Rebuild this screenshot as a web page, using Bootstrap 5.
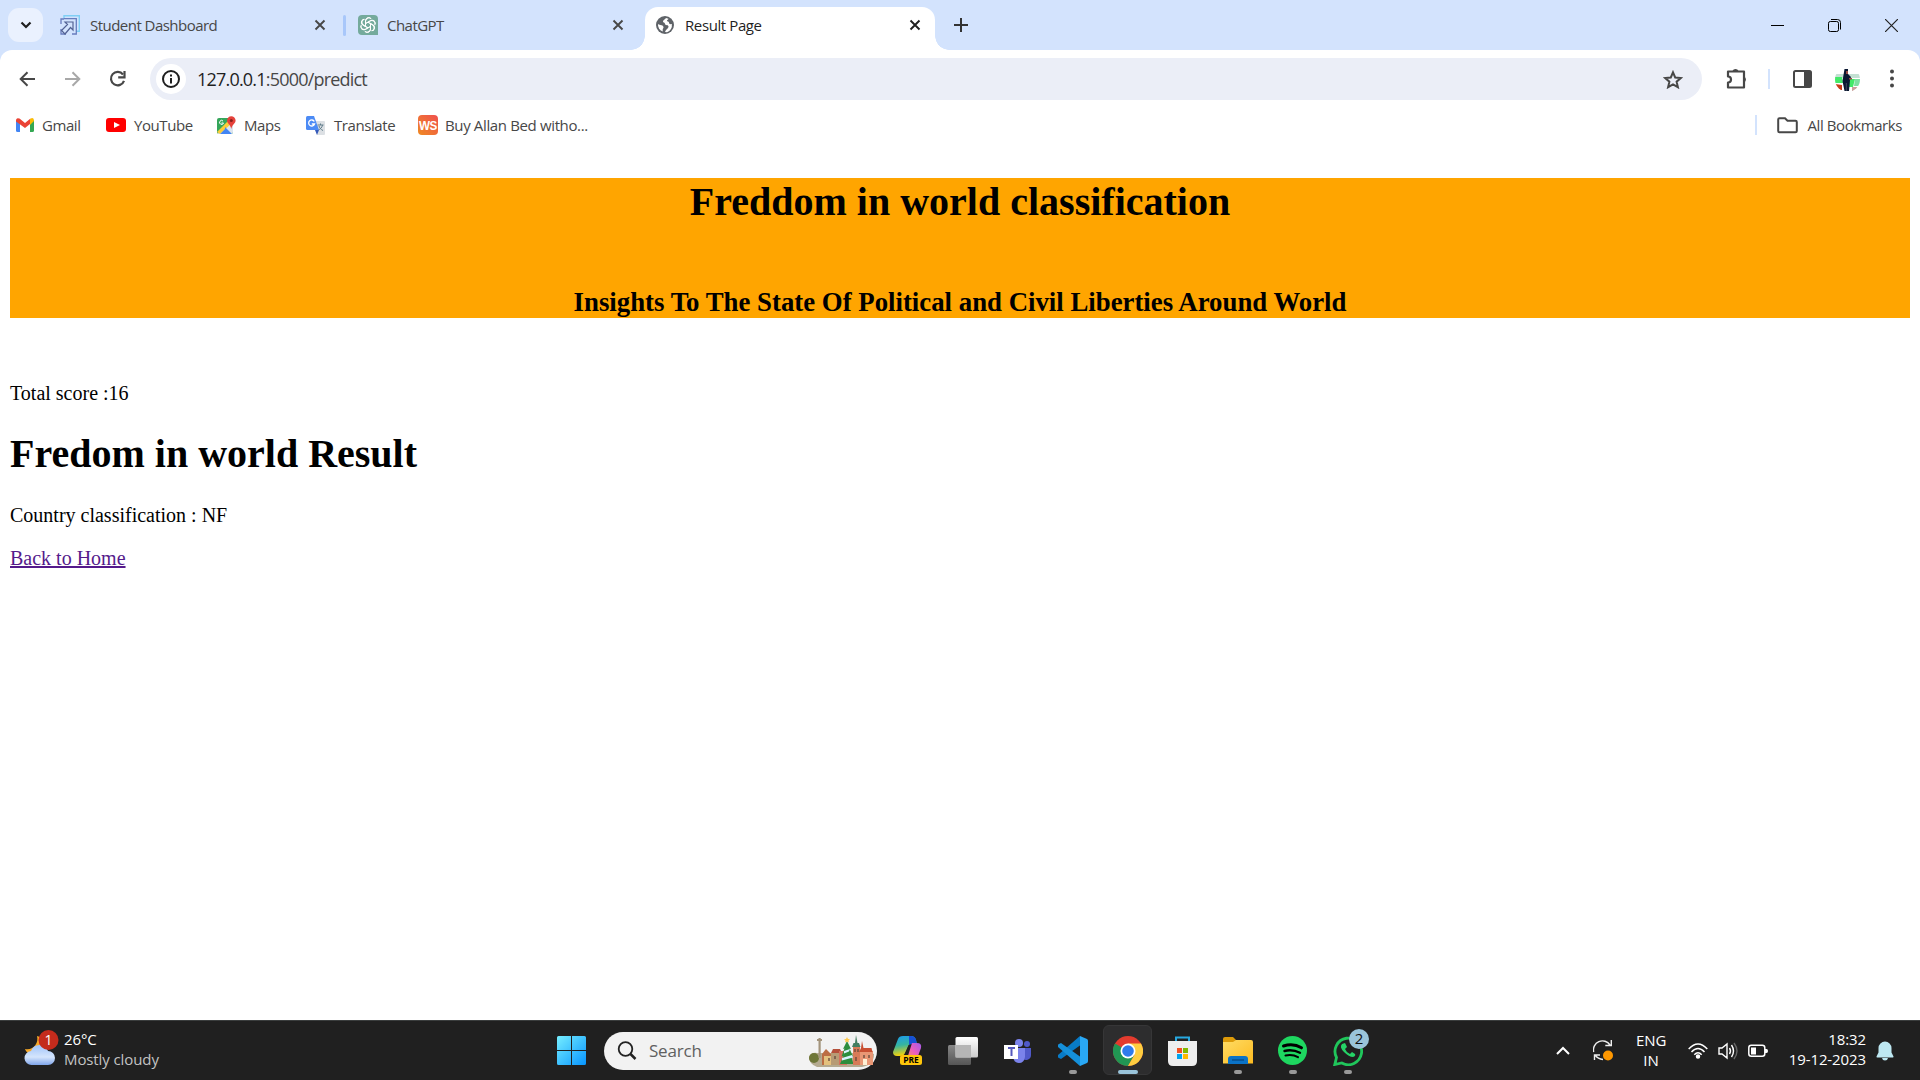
<!DOCTYPE html>
<html lang="en">
<head>
<meta charset="utf-8">
<title>Result Page</title>
<link href="https://cdn.jsdelivr.net/npm/bootstrap@5.3.0/dist/css/bootstrap.min.css" rel="stylesheet">
<style>
body{width:1920px;height:1080px;overflow:hidden;font-family:"Open Sans","Noto Sans",sans-serif;background:#fff;color:#000}
svg{display:block;flex:none}
.strip{height:50px;background:#d3e3fd;padding-left:8px}
.drop{width:35px;height:34px;border-radius:11px;background:#eaf1fe}
.tabx{height:50px;font-size:15px;letter-spacing:-.53px;line-height:20px;color:#474747;white-space:nowrap}
.tab-a{width:300px;padding-left:17px;padding-right:17px}
.tab-b{width:299px;padding-left:12px;padding-right:21px}
.tab-on{width:290px;height:43px;margin-top:7px;background:#fff;border-radius:13px 13px 0 0;padding:0 14px 7px 11px;color:#1f1f1f;position:relative}
.tab-on::before,.tab-on::after{content:"";position:absolute;bottom:0;width:14px;height:14px}
.tab-on::before{left:-14px;background:radial-gradient(circle at 0 0,transparent 13.5px,#fff 14px)}
.tab-on::after{right:-14px;background:radial-gradient(circle at 100% 0,transparent 13.5px,#fff 14px)}
.tab-line{width:3px;height:21px;background:#a8c7fa;border-radius:2px}
.winbtn{width:57px}
.under{background:#d3e3fd}
.tools{height:58px;background:#fff;border-radius:12px 12px 0 0;padding:0 16px 0 17px}
.omni{width:1552px;height:42px;border-radius:21px;background:#ebeef7;margin-left:23px;padding:0 19px 0 6px;font-size:18px}
.info{width:30px;height:30px;border-radius:50%;background:#fff;margin-right:11px}
.url{letter-spacing:-.8px;color:#474747}.url b{font-weight:400;color:#1f1f1f}
.marks{height:36px;font-size:15px;letter-spacing:-.42px;color:#474747;padding:0 18px 2px 16px;white-space:nowrap}
.vline{width:2px;height:20px;background:#d3e3fd}
.site{height:876px;font:20px/23px "Liberation Serif",serif;padding:34px 10px 0}
.banner{height:140px;background:orange}
.site h1{font-size:40px;font-weight:700;line-height:46px;margin:0}
.banner h1{padding-top:1px}
.banner h2{font-size:26.8px;font-weight:700;line-height:30px;margin:0;padding-bottom:1px}
.visited{color:#551a8b}
.bar{height:60px;background:#202020;border-top:1px solid #3a3d3d;color:#fff;font-size:15px;letter-spacing:-.1px;line-height:20px;white-space:nowrap}
.wx{width:544px;padding-left:24px}
.lift{padding-bottom:4px}
.slot{width:55px;height:59px;position:relative}
.slot.on::before{content:"";position:absolute;left:3px;right:3px;top:4px;height:50px;border-radius:6px;background:#2d2d2e;border:1px solid #363637}
.slot svg{position:relative}
.dot{position:absolute;left:24px;top:49px;width:8px;height:4px;border-radius:2px;background:#999}
.on .dot{left:18px;width:20px;background:#9ac4da}
.find{width:273px;height:38px;border-radius:19px;background:#f2f2f2;margin:0 3px 0 5px;padding:0 3px 0 13px;font-size:17px;letter-spacing:-.2px;color:#606060}
.tray{margin-left:auto;padding-right:26px}
</style>
<script src="https://cdn.jsdelivr.net/npm/bootstrap@5.3.0/dist/js/bootstrap.bundle.min.js"></script>
</head>
<body class="d-flex flex-column">
<svg width="0" height="0" class="position-absolute"><defs>
<symbol id="x" viewBox="0 0 12 12"><path d="M1.5 1.5l9 9M10.500 1.500l-9 9" stroke="currentColor" stroke-width="1.900"/></symbol>
<linearGradient id="win" x2="1" y2="1"><stop stop-color="#76eeff"/><stop offset="1" stop-color="#0795ff"/></linearGradient>
<linearGradient id="ws" x1="1" x2="0" y2="1"><stop stop-color="#f04f4f"/><stop offset="1" stop-color="#ef8a22"/></linearGradient>
<linearGradient id="cl" y2="1" x2="0"><stop stop-color="#9fc3fa"/><stop offset=".6" stop-color="#d5e5fc"/><stop offset="1" stop-color="#7fa5ea"/></linearGradient>
<linearGradient id="cp1" x2=".2" y2="1"><stop stop-color="#1b9bf0"/><stop offset=".5" stop-color="#35b5a0"/><stop offset="1" stop-color="#f5d20a"/></linearGradient>
<linearGradient id="cp2" x1="1" x2="0" y2="1"><stop stop-color="#a25bea"/><stop offset=".5" stop-color="#e95cc0"/><stop offset="1" stop-color="#ff9160"/></linearGradient>
<linearGradient id="tv" y2="1" x2="0"><stop stop-color="#fff"/><stop offset="1" stop-color="#ccc"/></linearGradient>
<linearGradient id="tg" y2="1" x2="0"><stop stop-color="#888"/><stop offset="1" stop-color="#555"/></linearGradient>
<linearGradient id="fo" x2="1" y2="1"><stop stop-color="#ffdc65"/><stop offset="1" stop-color="#fdbb20"/></linearGradient>
<clipPath id="ava"><circle cx="12.500" cy="12.500" r="12.500"/></clipPath>
<clipPath id="mapclip"><rect y="2" width="16" height="16" rx="2"/></clipPath>
</defs></svg>

<!-- tab strip -->
<header class="strip d-flex align-items-center">
 <div class="drop d-flex align-items-center justify-content-center"><svg width="12" height="8" viewBox="0 0 12 8"><path d="M1.500 1.500L6 6l4.500-4.500" fill="none" stroke="#1f1f1f" stroke-width="2.200"/></svg></div>
 <div class="tabx tab-a d-flex align-items-center">
  <svg width="20" height="20" viewBox="0 0 20 20" fill="none"><path d="M4 4V.700h15.300v15.500H16" stroke="#80cff5" stroke-width="1.400"/><path d="M4 3.700h12.300V19H12M1 9V4h3M1 14v5h5" stroke="#687cbd" stroke-width="1.300"/><path d="M5 7h8v8l-2.500-2.500L5 19l-3.500-3.500L7.500 9.500z" stroke="#536293" stroke-width="1.200"/></svg>
  <span style="margin-left:10px">Student Dashboard</span><svg class="ms-auto" width="12" height="12"><use href="#x"/></svg>
 </div>
 <div class="tab-line"></div>
 <div class="tabx tab-b d-flex align-items-center">
  <svg width="20" height="20" viewBox="0 0 20 20" fill="none"><path d="M4 0h12a4 4 0 0 1 4 4v16H4a4 4 0 0 1-4-4V4a4 4 0 0 1 4-4z" fill="#74aa9c"/><g stroke="#fff" stroke-width="1"><path id="petal" d="M7.500 11.500V6C7.500 2.200 11.800 1.500 13.400 4.200M7.500 8.600l4.200-2.500c3-1.600 5.700.7 5.300 3.200"/><use href="#petal" transform="rotate(60 10 10)"/><use href="#petal" transform="rotate(120 10 10)"/><use href="#petal" transform="rotate(180 10 10)"/><use href="#petal" transform="rotate(240 10 10)"/><use href="#petal" transform="rotate(300 10 10)"/></g></svg>
  <span style="margin-left:9px">ChatGPT</span><svg class="ms-auto" width="12" height="12"><use href="#x"/></svg>
 </div>
 <div class="tabx tab-on d-flex align-items-center">
  <svg width="18" height="18" viewBox="0 0 18 18"><circle cx="9" cy="9" r="9" fill="#5f6368"/><path d="M10 2c-1 2-3 1.500-3 3.500C7 7 9 6 9 8c0 1.500 4 .5 3.500 3-.5 2-3 2.500-3.500 5l2 .2A7.200 7.200 0 0 0 15.800 8c-2 .5-2.700-.2-2.800-1.500-.1-1.200-2-.7-2-2 0-1 1.500-.7 1.500-1.800zM2 8c2 1.500 5 .5 5.500 3 .3 1.400-1.500 1.500-.5 4.600A7 7 0 0 1 2 8z" fill="#fff"/></svg>
  <span style="margin-left:11px;letter-spacing:-.4px">Result Page</span><svg class="ms-auto" width="12" height="12"><use href="#x"/></svg>
 </div>
 <svg style="margin-left:19px" width="14" height="14"><path d="M7 0v14M0 7h14" stroke="#333" stroke-width="2"/></svg>
 <div class="ms-auto d-flex align-items-center">
  <div class="winbtn d-flex justify-content-center"><svg width="13" height="13"><path d="M0 6.500h13" stroke="#000"/></svg></div>
  <div class="winbtn d-flex justify-content-center"><svg width="13" height="13" fill="none" stroke="#000"><rect x=".5" y="2.500" width="10" height="10" rx="1.800"/><path d="M3 .5h6.500a3 3 0 0 1 3 3V10.500"/></svg></div>
  <div class="winbtn d-flex justify-content-center"><svg width="13" height="13"><path d="M0 0l13 13M13 0L0 13" stroke="#222" stroke-width="1.200"/></svg></div>
 </div>
</header>

<!-- toolbar -->
<div class="under"><div class="tools d-flex align-items-center">
 <svg width="20" height="16" viewBox="0 0 20 16" fill="none" stroke="#474747" stroke-width="2"><path d="M18 8H4M10.500 1.200L3.700 8l6.800 6.800"/></svg>
 <svg style="margin-left:26px" width="20" height="16" viewBox="0 0 20 16" fill="none" stroke="#a8a8a8" stroke-width="2"><path d="M2 8h14M9.500 1.200L16.300 8l-6.800 6.800"/></svg>
 <svg style="margin-left:25px" width="19" height="18" viewBox="0 0 19 18" fill="none" stroke="#474747" stroke-width="2.200"><path d="M15 4.500a6.700 6.700 0 1 0 1 6.300"/><path d="M16.500 1v6.300h-6.300" /></svg>
 <div class="omni d-flex align-items-center">
  <div class="info d-flex align-items-center justify-content-center"><svg width="18" height="18" fill="none"><circle cx="9" cy="9" r="8" stroke="#1f1f1f" stroke-width="2"/><path d="M9 8v5.500M9 4.500v2" stroke="#1f1f1f" stroke-width="2"/></svg></div>
  <span class="url"><b>127.0.0.1</b>:5000/predict</span>
  <svg class="ms-auto" width="20" height="19" viewBox="0 0 20 19"><path d="M10 2.300l2.200 5.200 5.600.5-4.200 3.700 1.300 5.500L10 14.300l-4.900 2.900 1.300-5.500L2.200 8l5.600-.5z" fill="none" stroke="#474747" stroke-width="2"/></svg>
 </div>
 <svg style="margin-left:24px" width="22" height="22" viewBox="0 0 22 22"><path d="M2 3.500h16v16H2v-5c4 0 4-6 0-6z" fill="none" stroke="#474747" stroke-width="2.200" stroke-linejoin="round"/><path d="M6.500 3a3.200 3 0 0 1 6 0zM18 8.500a3 3.200 0 0 1 0 6z" fill="#474747"/></svg>
 <div class="vline" style="margin-left:20px"></div>
 <svg style="margin-left:23px" width="19" height="18"><rect x="1" y="1" width="17" height="16" rx="1.500" fill="none" stroke="#474747" stroke-width="2"/><path d="M11 1h7v16h-7z" fill="#474747"/></svg>
 <svg style="margin-left:23px" width="25" height="25"><g clip-path="url(#ava)"><path d="M0 0h25v25H0z" fill="#fff"/><path d="M0 7h25v4H0z" fill="#c3e0d2"/><path d="M0 10h7l1 6H0zM14 12h6l-2 8h-4z" fill="#43e968"/><path d="M20 12h5v7h-6z" fill="#7de0a0"/><path d="M0 17l7 1v5H0z" fill="#c73d18"/><path d="M17 20h8v5h-8z" fill="#c8a09b"/><path d="M9.500 2h3.500v5l3 3-1 3-1 11H9.500L7.500 14l1-6z" fill="#0b1832"/><path d="M11 4h2v3h-2zM14 11h3v1.500h-3z" fill="#974c45"/><path d="M11.300 16v8" stroke="#5a6070" stroke-width=".7"/></g></svg>
 <svg class="ms-auto" width="24" height="20"><g fill="#474747"><circle cx="12" cy="2.500" r="2"/><circle cx="12" cy="9.500" r="2"/><circle cx="12" cy="16.500" r="2"/></g></svg>
</div></div>

<!-- bookmarks -->
<nav class="marks d-flex align-items-center">
 <svg width="18" height="14" viewBox="0 0 18 14"><path d="M0 2v10.500Q0 14 1.500 14H4V5z" fill="#4285f4"/><path d="M14 5v9h2.500q1.500 0 1.500-1.500V2z" fill="#34a853"/><path d="M0 3Q0-1 3.500.600L9 5l5.500-4.400L14 6 9 10 0 3.500z" fill="#ea4335"/><path d="M14 1q4-2.500 4 2l-4 4z" fill="#fbbc04"/></svg>
 <span style="margin-left:8px;width:64px">Gmail</span>
 <svg width="20" height="14"><rect width="20" height="14" rx="3" fill="#f00"/><path d="M8 4l6 3-6 3z" fill="#fff"/></svg>
 <span style="margin-left:8px;width:83px">YouTube</span>
 <svg width="19" height="19" viewBox="0 0 19 19"><g clip-path="url(#mapclip)"><path d="M0 2h16v16H0z" fill="#35a65a"/><path d="M0 18L16 3v15z" fill="#dce5ef"/><path d="M0 16L12 4l3 3L3 18z" fill="#fbcd3a"/><path d="M8 11l7 7H3l5-5z" fill="#4285f4"/></g><path d="M10 4.500a4.300 4.300 0 0 1 8.600 0c0 3-3.600 4-4.300 8.500-.7-4.500-4.300-5.500-4.300-8.500z" fill="#e5423b"/><circle cx="14.300" cy="4.500" r="1.500" fill="#891f1b"/><path d="M6 5a2 2 0 1 0 .5 2H4.500" fill="none" stroke="#fff"/></svg>
 <span style="margin-left:8px;width:62px">Maps</span>
 <svg width="19" height="19" viewBox="0 0 19 19"><path d="M7 5h11q1 0 1 1v12q0 1-1 1h-7z" fill="#dce0e4"/><path d="M1.500 0H8l5 14H1.500Q0 14 0 12.500v-11Q0 0 1.500 0z" fill="#4c8bf5"/><path d="M9 14h4l-2 5z" fill="#3459ba"/><path d="M8.300 5.500a3 3 0 1 0 .2 2.500H5.800" stroke="#fff" fill="none" stroke-width="1.300"/><path d="M11.500 9h6M14.500 7.500V9M16.500 9c-.5 3-2.500 4-4 5M13 10c.5 2 2 3.500 4 4.500" fill="none" stroke="#607d8b"/></svg>
 <span style="margin-left:9px;width:84px">Translate</span>
 <svg width="20" height="20"><rect width="20" height="20" rx="4" fill="url(#ws)"/><text x="10" y="14.500" text-anchor="middle" textLength="18" lengthAdjust="spacingAndGlyphs" font-family="Liberation Sans,sans-serif" font-weight="700" font-size="12.500" fill="#fff">WS</text></svg>
 <span style="margin-left:7px;letter-spacing:-.36px">Buy Allan Bed witho...</span>
 <div class="vline ms-auto"></div>
 <svg style="margin-left:20px" width="21" height="17"><path d="M1.200 14V2.500q0-1.300 1.300-1.300H8l2.500 2.500h8q1.300 0 1.300 1.300v9q0 1.300-1.300 1.300h-16q-1.300 0-1.300-1.300z" fill="none" stroke="#474747" stroke-width="2"/></svg>
 <span style="margin-left:10px">All Bookmarks</span>
</nav>

<!-- page -->
<main class="site">
 <div class="banner text-center d-flex flex-column justify-content-between"><h1>Freddom in world classification</h1><h2>Insights To The State Of Political and Civil Liberties Around World</h2></div>
 <p style="margin:64px 0 26px">Total score :16</p>
 <h1>Fredom in world Result</h1>
 <p style="margin:27px 0 20px">Country classification : NF</p>
 <a class="visited" href="#">Back to Home</a>
</main>

<!-- taskbar -->
<footer class="bar d-flex align-items-center">
 <div class="wx lift d-flex align-items-center">
  <svg width="36" height="40" viewBox="0 0 36 40"><path d="M13 7c2 7-4 15-12 13 2 6 10 8 15 2V8z" fill="#f7a928"/><path d="M8 36a7 7 0 0 1-1-14 9 9 0 0 1 17 0 7 7 0 0 1 0 14z" fill="url(#cl)"/><circle cx="24.500" cy="11" r="10" fill="#c42b1c"/><text x="24.500" y="16" text-anchor="middle" font-size="14" fill="#fff">1</text></svg>
  <div style="margin-left:4px"><div>26°C</div><div style="color:#c3c3c3">Mostly cloudy</div></div>
 </div>
 <div class="slot d-flex align-items-center justify-content-center"><svg width="29" height="29"><path d="M0 1.500Q0 0 1.500 0H14v14H0zM15 0h12.500Q29 0 29 1.500V14H15zM0 15h14v14H1.500Q0 29 0 27.500zM15 15h14v12.500q0 1.500-1.500 1.500H15z" fill="url(#win)"/></svg></div>
 <div class="find d-flex align-items-center">
  <svg width="20" height="20" fill="none" stroke="#222"><circle cx="8.500" cy="8" r="6.800" stroke-width="1.800"/><path d="M13.500 13l5 5" stroke-width="2.500"/></svg>
  <span style="margin-left:12px">Search</span>
  <svg class="ms-auto" width="65" height="34" viewBox="0 0 65 34"><path d="M0 23q2-5 8-4h54l3 1q0 11-12 13H8q-8-3-8-10z" fill="#b5aa90"/><circle cx="5" cy="24" r="5" fill="#6e7638"/><path d="M9.500 4h2.200v20H9.500zM8 5h5v2H8z" fill="#a3947c"/><path d="M13 20l4-5 5 5v11h-9z" fill="#bc6d43"/><path d="M15 22h7v9h-7z" fill="#e4c17e"/><path d="M22 19h10v12H22z" fill="#b79b75"/><path d="M22 19l2-4h7l2 4z" fill="#b5503a"/><path d="M30 17h8v14h-8z" fill="#d6725f"/><path d="M38 7l4 8-1.500-.5 3.500 8-2-.5 2.500 8H31l3.500-8-2 .5 3-8-1.500.5z" fill="#2d8d3d"/><path d="M35 17l6-2-1 2.500-5 2zM33 24l10-3 1 2.500-11 3z" fill="#d7f2ff"/><path d="M38 3l1 2h2l-1.500 1.500.5 2-2-1-2 1 .5-2L35 5h2z" fill="#ffc94b"/><path d="M44 13h7v18h-7z" fill="#d77b58"/><path d="M43 13l1.500-4L46 9l1-8 1.500 8h1.500l1.500 4z" fill="#437e61"/><path d="M51 17h13v14H51z" fill="#e99775"/><path d="M50 18l2-4 1-7 1.500 7h8l1 4z" fill="#c94f32"/><path d="M46 15v3M49 15v3M55 21v3M60 21v3M20 24v3M26 22v3M47 23v4" stroke="#63473a" stroke-width="1.300"/><path d="M54 25h4v6h-4z" fill="#fff0d5"/></svg>
 </div>
 <div class="slot d-flex align-items-center justify-content-center"><svg width="29" height="29"><path d="M5 3q1-3 5-3h8q4 0 5 4l1 4h-4q-4 0-5 3l-3 6q-1 3-5 3H4q-4 0-4-4z" fill="url(#cp1)"/><path d="M16 0h2q4 0 5 4l1 4h-4q-3 0-4 2z" fill="#164fd5"/><path d="M15.500 9L11 20h4l4-12z" fill="#202020"/><path d="M19 7h5q5 0 4 5l-3 8q-1 3-5 3h-6z" fill="url(#cp2)"/><rect x="7" y="19" width="22" height="10" rx="2.500" fill="#ffc60b"/><text x="18" y="27" text-anchor="middle" font-weight="700" font-size="8.500" fill="#000">PRE</text></svg></div>
 <div class="slot d-flex align-items-center justify-content-center"><svg width="30" height="28"><rect y="8" width="23" height="20" rx="1.500" fill="url(#tg)"/><rect x="7.500" width="22.500" height="20.500" rx="1.500" fill="url(#tv)"/><path d="M7.500 8H23v12.500H7.500z" fill="#b5b5b5"/></svg></div>
 <div class="slot d-flex align-items-center justify-content-center"><svg width="27" height="24"><circle cx="23" cy="5" r="3" fill="#5059c9"/><path d="M18 9h9v7a5 5 0 0 1-9 3z" fill="#5059c9"/><circle cx="15" cy="4" r="4" fill="#7b83eb"/><path d="M8 9h13v9q-1 6-6 6t-6-6z" fill="#7b83eb"/><path d="M0 6h14v14H0z" fill="#fff"/><path d="M4 9h7M7.500 9v8" stroke="#5558bd" stroke-width="2"/></svg></div>
 <div class="slot d-flex align-items-center justify-content-center"><svg width="30" height="30"><path d="M22 0L0 19q-1 2 1 3l2 1L24 8z" fill="#087bc7"/><path d="M22 30L0 11q-1-2 1-3l2-1 21 15z" fill="#1590da"/><path d="M22 0l7 3q1 .5 1 2v20q0 1.500-1 2l-7 3z" fill="#29a8f5"/></svg><i class="dot"></i></div>
 <div class="slot on d-flex align-items-center justify-content-center"><svg width="30" height="30"><circle cx="15" cy="15" r="15" fill="#e33b2e"/><path d="M2 7.500A15 15 0 0 0 15 30l6.500-11.300L15 15z" fill="#219653"/><path d="M15 7.500h13A15 15 0 0 1 15 30l6.500-11.300z" fill="#ffcd40"/><circle cx="15" cy="15" r="7.500" fill="#fff"/><circle cx="15" cy="15" r="5.800" fill="#2f7bed"/></svg><i class="dot"></i></div>
 <div class="slot d-flex align-items-center justify-content-center"><svg width="29" height="30"><path d="M8 6V1.500h13V6" fill="none" stroke="#27a9e1" stroke-width="2"/><path d="M0 5h29v20q0 5-5 5H5q-5 0-5-5z" fill="#eee"/><path d="M9 12h5v5H9z" fill="#f25022"/><path d="M15 12h5v5h-5z" fill="#7fba00"/><path d="M9 18h5v5H9z" fill="#00a4ef"/><path d="M15 18h5v5h-5z" fill="#ffb900"/></svg></div>
 <div class="slot d-flex align-items-center justify-content-center"><svg width="30" height="27"><path d="M0 2q0-2 2-2h8l4 4v6H0z" fill="#dd9b09"/><path d="M0 5h10l3-2h15q2 0 2 2v21.500H0z" fill="url(#fo)"/><path d="M5 27v-5q0-3 3-3h14q3 0 3 3v5z" fill="#0b73c7"/><path d="M9 23h12" stroke="#074984" stroke-width="1.300"/></svg><i class="dot"></i></div>
 <div class="slot d-flex align-items-center justify-content-center"><svg width="29" height="29" fill="none"><circle cx="14.500" cy="14.500" r="14.500" fill="#1ed760"/><g stroke="#000" stroke-linecap="round"><path d="M5.500 10q10-3 18 1.800" stroke-width="3"/><path d="M6.500 15q8-2 15.500 1.800" stroke-width="2.400"/><path d="M7.500 19.500q7-1.500 12.500 1.700" stroke-width="2"/></g></svg><i class="dot"></i></div>
 <div class="slot d-flex align-items-center justify-content-center"><svg width="30" height="30" fill="none"><path d="M3.500 21.500A13.300 13.300 0 1 1 8.800 27L1.800 28.500z" stroke="#20c65b" stroke-width="2.800"/><path d="M9 8q-3 3 2 8t9 5q3-1 2-3l-3-2-2 2q-4-2-5-5l2-2-2-4z" fill="#25d366"/></svg><i class="dot"></i>
  <svg style="position:absolute;left:29px;top:8px" width="20" height="20"><circle cx="10" cy="10" r="10" fill="#9ac4da"/><text x="10" y="15.300" text-anchor="middle" font-size="15" fill="#111">2</text></svg></div>

 <div class="tray d-flex align-items-center">
  <svg width="14" height="9"><path d="M1 8l6-6 6 6" fill="none" stroke="#fff" stroke-width="2"/></svg>
  <svg style="margin-left:23px" width="20" height="21" fill="none"><path d="M.700 12A9 9 0 0 1 17 5M18.300 0v5.500h-6M1.500 20v-5H7M2 15q3 4 8 4.500" stroke="#eee" stroke-width="1.400"/><circle cx="15" cy="15.500" r="5" fill="#ff9800"/></svg>
  <div class="text-center" style="width:30px;margin-left:23px;padding-bottom:2px"><div>ENG</div><div>IN</div></div>
  <svg style="margin-left:22px" width="20" height="16" fill="none" stroke="#fff" stroke-width="1.500"><path d="M.700 6Q10-4 19.300 6M3.500 9q6.500-7 13 0M6.300 11.800q3.700-4 7.400 0"/><circle cx="10" cy="13.500" r="1.500" fill="#fff"/></svg>
  <svg style="margin-left:10px" width="20" height="18" fill="none" stroke="#fff" stroke-width="1.400"><path d="M1 6h3l5-4v14l-5-4H1zM11.500 6q2 3 0 6M13.500 3q4 6 0 12"/><path d="M16 1q6 8 0 16" stroke="#666"/></svg>
  <svg style="margin-left:10px" width="20" height="14"><rect x=".8" y="1.300" width="16" height="11" rx="2.500" fill="none" stroke="#fff" stroke-width="1.500"/><path d="M3 3.500h5v7H3zM17 5h1.500q1.500 0 1.500 2t-1.500 2H17z" fill="#fff"/></svg>
  <div class="text-end lift" style="width:78px;margin-left:20px"><div>18:32</div><div>19-12-2023</div></div>
  <svg style="margin-left:10px" width="18" height="20"><path d="M9 .500a6.500 6.500 0 0 1 6.500 6.500v4.500l2 4q.2 1-.7 1H1.200q-.9 0-.7-1l2-4V7A6.500 6.500 0 0 1 9 .500zM6 17h6q-.5 2.500-3 2.500T6 17z" fill="#bde8f2"/></svg>
 </div>
</footer>
</body>
</html>
